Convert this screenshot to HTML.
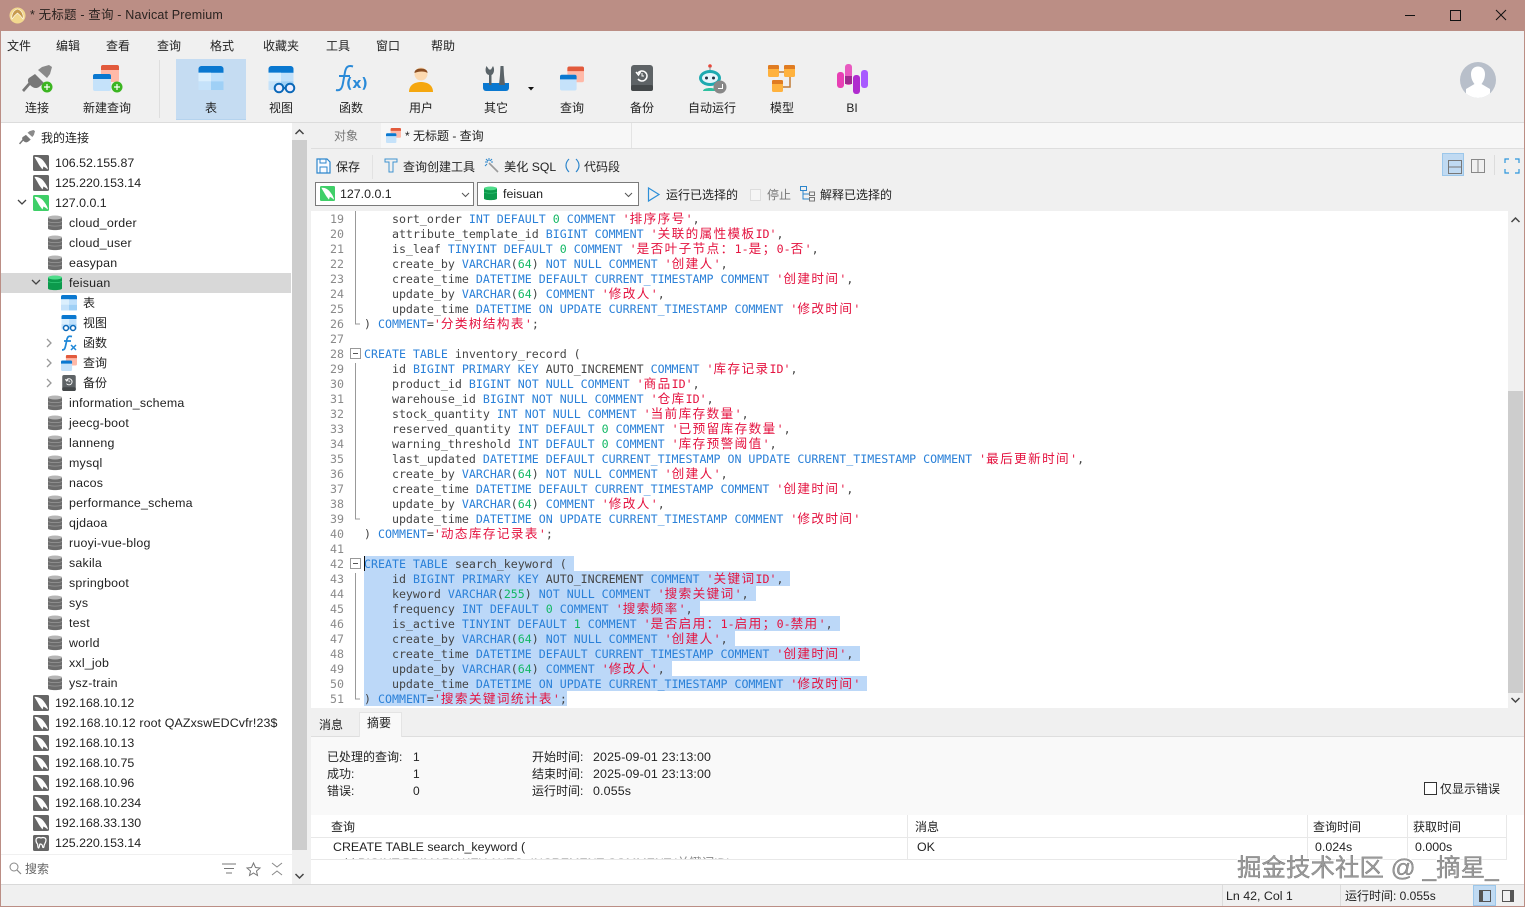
<!DOCTYPE html>
<html><head><meta charset="utf-8"><style>
html,body{margin:0;padding:0;width:1525px;height:907px;overflow:hidden;background:#f0f0f0}
body{position:relative;font-family:"Liberation Sans","Noto Sans CJK SC",sans-serif;font-size:12px;color:#222}
.a{position:absolute}
.t{position:absolute;line-height:20px;height:20px;white-space:pre}
.c{text-align:center;transform:translateX(-50%)}
.t[style*="left:55px"],.t[style*="left:69px"],.t[style*="left:83px"],.t[style*="left:41px"],.t[style*="top:97px"],.t[style*="top:35px"],.t[style*="top:836px"]{margin-top:1px}
.t[style*="left:55px"],.t[style*="left:69px"],.t[style*="top:836px"],.t[style*="left:340px"],.t[style*="left:503px"],.t[style*="left:1226px"]{font-size:12.4px}
.t[style*="left:69px"]{letter-spacing:.22px}
.t.r{letter-spacing:.12px}
.t.dt{font-size:12.4px;letter-spacing:.16px}
svg{position:absolute;overflow:visible}
#code{position:absolute;left:364px;top:211px;font-family:"DejaVu Sans Mono","Liberation Mono",monospace;font-size:11.62px;line-height:15px;color:#444}
#code div{height:15px;padding-top:1px;box-sizing:border-box;white-space:pre;width:fit-content}
#code div.e{color:transparent}
#code .h{background:#bcd8f8;padding-right:7px}
#code b{font-weight:normal;color:#2a80d8}
#code i{font-style:normal;color:#e4123f}
#code u{text-decoration:none;color:#12b864}
#code s{text-decoration:none;font-family:"Noto Sans CJK SC",sans-serif;font-size:12.6px;letter-spacing:1.4px;line-height:0}
#nums{position:absolute;left:311px;width:33px;top:212px;text-align:right;font-family:"DejaVu Sans Mono",monospace;font-size:11.62px;line-height:15px;color:#8a8a8a}
</style></head><body>
<svg width="0" height="0" style="position:absolute"><defs>
<symbol id="my" viewBox="0 0 16 16"><rect width="16" height="16" rx="1.5" fill="#666"/><path d="M1.500 2C5 1.500 8.500 3.500 10.500 6 12.500 8.500 14.500 11.500 15 14.500 13 13 11.500 12 10.500 11.500L9.500 14.500C7.500 12 6 10 5 8 4 6 2.500 4 1.500 2Z" fill="#fff"/></symbol>
<symbol id="myg" viewBox="0 0 16 16"><rect width="16" height="16" rx="1.5" fill="#3fcf68"/><path d="M1.500 2C5 1.500 8.500 3.500 10.500 6 12.500 8.500 14.500 11.500 15 14.500 13 13 11.500 12 10.500 11.500L9.500 14.500C7.500 12 6 10 5 8 4 6 2.500 4 1.500 2Z" fill="#fff"/></symbol>
<symbol id="pg" viewBox="0 0 16 16"><rect width="16" height="16" rx="1.5" fill="#666"/><path d="M3 5C3 2.500 6 2 8 3 10 2 13 2.500 13 5 13 8 11 9 11 11 11 13 9.500 13 9.500 11 9 9 8 9 7 9 6.500 9 6.500 13 5.500 13 4.500 13 5 10 4.500 9 3.500 8 3 7 3 5Z" fill="none" stroke="#fff" stroke-width="1.200"/></symbol>
<symbol id="db" viewBox="0 0 14 16"><path d="M0 2.500C0 .5 14 .5 14 2.500V13.500C14 15.700 0 15.700 0 13.500Z" fill="#6b6b6b"/><ellipse cx="7" cy="2.500" rx="7" ry="2" fill="#b5b5b5"/><path d="M0 6.500C3 8 11 8 14 6.500M0 10C3 11.500 11 11.500 14 10" stroke="#999" stroke-width=".7" fill="none"/></symbol>
<symbol id="dbg" viewBox="0 0 14 16"><path d="M0 2.500C0 .5 14 .5 14 2.500V13.500C14 15.700 0 15.700 0 13.500Z" fill="#0c9a4c"/><ellipse cx="7" cy="2.500" rx="7" ry="2" fill="#4fdc8a"/><path d="M0 6.500C3 8 11 8 14 6.500" stroke="#35c878" stroke-width=".7" fill="none"/></symbol>
<symbol id="tb" viewBox="0 0 26 26"><rect x="0" y="0" width="26" height="25" rx="3" fill="#bfe0fb"/><path d="M0 3A3 3 0 0 1 3 0H23A3 3 0 0 1 26 3V7H0Z" fill="#0a78d0"/><rect x="0" y="7" width="13" height="9" fill="#dbeffd"/><rect x="13" y="16" width="13" height="9" fill="#9fd0f6"/><rect x="0" y="16" width="13" height="9" fill="#c5e2fa"/></symbol>
<symbol id="qr" viewBox="0 0 26 26"><rect x="8" y="0" width="18" height="17" rx="2" fill="#ffb9a8"/><path d="M8 2A2 2 0 0 1 10 0H24A2 2 0 0 1 26 2V5H8Z" fill="#e25a3c"/><rect x="0" y="9" width="18" height="17" rx="2" fill="#c5e2fa"/><path d="M0 11A2 2 0 0 1 2 9H16A2 2 0 0 1 18 11V14H0Z" fill="#0a78d0"/></symbol>
<symbol id="bk" viewBox="0 0 22 26"><rect width="22" height="26" rx="3" fill="#5e6366"/><rect y="20" width="22" height="6" rx="2" fill="#44484a"/><path d="M7 8A5 5 0 1 1 7 14M5 7L7.500 10 9.500 7" fill="none" stroke="#fff" stroke-width="1.500"/><path d="M11 8V11H13" fill="none" stroke="#fff" stroke-width="1"/></symbol>
<symbol id="plug" viewBox="0 0 30 28"><g fill="#777"><path d="M13 9L22 18 17 22C14 24 11 23 8 20 6 18 5 15 7 13Z"/><path d="M9 19L2 27 0 25 7 17Z"/><path d="M16 5L25 13 28 9 30 2 27 0 20 2Z" opacity=".85"/></g></symbol>
</defs></svg>

<!-- title bar -->
<div class="a" style="left:0;top:0;width:1525px;height:31px;background:#bb8e85"></div>
<div class="a" style="left:0;top:0;width:1px;height:907px;background:#bb8e85;z-index:9"></div>
<div class="a" style="right:0;top:0;width:1px;height:907px;background:#bb8e85;z-index:9"></div>
<div class="a" style="left:0;top:906px;width:1525px;height:1px;background:#bb8e85;z-index:9"></div>
<svg style="left:9px;top:7px" width="17" height="17" viewBox="0 0 17 17"><circle cx="8.500" cy="8.500" r="8" fill="#f2d88e"/><path d="M3 12C2 7 5 3 8.500 2 12 3 15 7 14 12 12 9 11 8 8.500 6 6 8 5 9 3 12Z" fill="#c79a4e" stroke="#fff" stroke-width=".6"/></svg>
<div class="t" style="left:30px;top:5px;font-size:12.500px;color:#2a2320;letter-spacing:.17px">* 无标题 - 查询 - Navicat Premium</div>
<div class="a" style="left:1405px;top:15px;width:10px;height:1px;background:#111"></div>
<div class="a" style="left:1450px;top:10px;width:9px;height:9px;border:1px solid #111"></div>
<svg style="left:1496px;top:10px" width="10" height="10"><path d="M0 0L10 10M10 0L0 10" stroke="#111" stroke-width="1"/></svg>

<!-- menu -->
<div class="t" style="left:7px;top:35px">文件</div><div class="t" style="left:56px;top:35px">编辑</div><div class="t" style="left:106px;top:35px">查看</div><div class="t" style="left:157px;top:35px">查询</div><div class="t" style="left:210px;top:35px">格式</div><div class="t" style="left:263px;top:35px">收藏夹</div><div class="t" style="left:326px;top:35px">工具</div><div class="t" style="left:376px;top:35px">窗口</div><div class="t" style="left:431px;top:35px">帮助</div>

<!-- toolbar -->
<div class="a" style="left:159px;top:60px;width:1px;height:58px;background:#dedede"></div>
<div class="a" style="left:176px;top:59px;width:70px;height:60px;background:#c5dcf2;border-bottom:1px solid #b5d3ee"></div>
<svg style="left:22px;top:65px" width="30" height="28"><use href="#plug"/><circle cx="25" cy="22" r="5.500" fill="#3cb521"/><path d="M22 22H28M25 19V25" stroke="#fff" stroke-width="1.200"/></svg>
<svg style="left:93px;top:65px" width="30" height="28"><use href="#qr" width="26" height="26"/><circle cx="24" cy="22" r="5.500" fill="#3cb521"/><path d="M21 22H27M24 19V25" stroke="#fff" stroke-width="1.200"/></svg>
<svg style="left:198px;top:66px" width="26" height="25"><use href="#tb" width="26" height="25"/></svg>
<svg style="left:268px;top:66px" width="28" height="28"><use href="#tb" width="26" height="25"/><circle cx="11" cy="22" r="4.300" fill="#eef" stroke="#0a68b8" stroke-width="2"/><circle cx="22" cy="22" r="4.300" fill="#eef" stroke="#0a68b8" stroke-width="2"/><path d="M15 22H18" stroke="#0a68b8" stroke-width="2"/></svg>
<svg style="left:335px;top:65px" width="34" height="28"><path d="M1 25C5 26 7 24 8 18L10 7C11 2 13 0 18 1.500M4 11H15" fill="none" stroke="#2a8ad8" stroke-width="2"/><text x="11" y="23" font-family="DejaVu Sans,sans-serif" font-size="14" font-weight="bold" fill="#2a8ad8">(x)</text></svg>
<svg style="left:408px;top:65px" width="26" height="28"><circle cx="13" cy="9" r="6.500" fill="#fcd9b0"/><path d="M6.500 8C6 2 20 2 19.500 8 17 6 11 6 6.500 8Z" fill="#8a4d22"/><path d="M1 27C1 19 8 17 13 17 18 17 25 19 25 27Z" fill="#f5a70f"/></svg>
<svg style="left:483px;top:65px" width="26" height="27"><path d="M0 18H26V23A3 3 0 0 1 23 26H3A3 3 0 0 1 0 23Z" fill="#0a78d0"/><path d="M6 20V10C2 9 2 4 3.500 1L6 4.500 8 4.500 10 1C12 4 11 9 8.500 10V20Z" fill="#5a6368"/><path d="M17.500 1H20.500L21 10 22 20H16L17 10Z" fill="#5a6368"/></svg>
<svg style="left:528px;top:87px" width="6" height="4"><path d="M0 0H6L3 3.500Z" fill="#111"/></svg>
<svg style="left:560px;top:65px" width="26" height="27"><use href="#qr" width="24" height="27"/></svg>
<svg style="left:631px;top:65px" width="22" height="26"><use href="#bk" width="22" height="26"/></svg>
<svg style="left:696px;top:63px" width="32" height="32"><circle cx="14" cy="3" r="1.800" fill="#e8473a"/><path d="M14 4V8" stroke="#888"/><ellipse cx="14" cy="15" rx="11" ry="8" fill="#1eaab0"/><ellipse cx="14" cy="15" rx="8" ry="5" fill="#e6f6fb"/><circle cx="10.500" cy="15" r="1.500" fill="#234"/><circle cx="17.500" cy="15" r="1.500" fill="#234"/><path d="M7 28C7 24 21 24 21 28Z" fill="#2ec0a0"/><circle cx="24" cy="24" r="6.500" fill="#888"/><path d="M26.500 21V25.500H22" fill="none" stroke="#fff"/></svg>
<svg style="left:768px;top:65px" width="28" height="28"><path d="M10 7H22V22H10" fill="none" stroke="#c07a36" stroke-width="1.500"/><rect x="0" y="0" width="11" height="12" rx="1.500" fill="#ffb23e"/><path d="M0 4V1.500A1.500 1.500 0 0 1 1.500 0H9.500A1.500 1.500 0 0 1 11 1.500V4Z" fill="#e07c22"/><rect x="16" y="0" width="11" height="12" rx="1.500" fill="#ffb23e"/><path d="M16 4V1.500A1.500 1.500 0 0 1 17.500 0H25.500A1.500 1.500 0 0 1 27 1.500V4Z" fill="#e07c22"/><rect x="4" y="15" width="11" height="12" rx="1.500" fill="#ffb23e"/><path d="M4 19V16.500A1.500 1.500 0 0 1 5.500 15H13.500A1.500 1.500 0 0 1 15 16.500V19Z" fill="#e07c22"/></svg>
<svg style="left:837px;top:64px" width="32" height="31"><rect x="0" y="8" width="7" height="16" rx="3" fill="#e83fb4"/><rect x="8" y="0" width="7" height="21" rx="3" fill="#e85ac0"/><rect x="16" y="11" width="7" height="19" rx="3" fill="#b02ccf"/><rect x="24" y="6" width="7" height="18" rx="3" fill="#a85aff"/><rect x="8" y="12" width="7" height="8" fill="#a02a90"/></svg>
<div class="t c" style="left:37px;top:97px">连接</div><div class="t c" style="left:107px;top:97px">新建查询</div><div class="t c" style="left:211px;top:97px">表</div><div class="t c" style="left:281px;top:97px">视图</div><div class="t c" style="left:351px;top:97px">函数</div><div class="t c" style="left:421px;top:97px">用户</div><div class="t c" style="left:496px;top:97px">其它</div><div class="t c" style="left:572px;top:97px">查询</div><div class="t c" style="left:642px;top:97px">备份</div><div class="t c" style="left:712px;top:97px">自动运行</div><div class="t c" style="left:782px;top:97px">模型</div><div class="t c" style="left:852px;top:97px">BI</div>
<svg style="left:1460px;top:62px" width="36" height="36"><defs><clipPath id="av"><circle cx="18" cy="18" r="18"/></clipPath></defs><circle cx="18" cy="18" r="18" fill="#b8bfca"/><g clip-path="url(#av)" fill="#fff"><path d="M11 12C11 2 25 2 25 12 25 17 23 20 21.500 22L30 27 30 36H6V27L14.500 22C13 20 11 17 11 12Z"/></g></svg>
<div class="a" style="left:1px;top:122px;width:1523px;height:1px;background:#dcdcdc"></div>

<!-- left tree -->
<div class="a" style="left:1px;top:123px;width:291px;height:761px;background:#fff"></div>
<div class="a" style="left:292px;top:123px;width:18px;height:761px;background:#f0f0f0"></div>
<div class="a" style="left:292px;top:140px;width:15px;height:710px;background:#cdcdcd"></div>
<svg style="left:295px;top:129px" width="9" height="6"><path d="M.5 5L4.500 1 8.500 5" fill="none" stroke="#444" stroke-width="1.500"/></svg>
<svg style="left:295px;top:873px" width="9" height="6"><path d="M.5 1L4.500 5 8.500 1" fill="none" stroke="#444" stroke-width="1.500"/></svg>
<div class="a" style="left:1px;top:273px;width:290px;height:20px;background:#d8d8d8"></div>
<svg style="left:19px;top:130px" width="16" height="15" viewBox="0 0 30 28"><use href="#plug" width="30" height="28"/></svg>
<div class="t" style="left:41px;top:127px">我的连接</div>
<svg style="left:33px;top:155px" width="16" height="16"><use href="#my"/></svg><div class="t" style="left:55px;top:152px">106.52.155.87</div>
<svg style="left:33px;top:175px" width="16" height="16"><use href="#my"/></svg><div class="t" style="left:55px;top:172px">125.220.153.14</div>
<svg style="left:17px;top:199px" width="10" height="7"><path d="M1 1L5 5 9 1" fill="none" stroke="#444" stroke-width="1.300"/></svg>
<svg style="left:33px;top:195px" width="16" height="16"><use href="#myg"/></svg><div class="t" style="left:55px;top:192px">127.0.0.1</div>
<svg style="left:48px;top:215px" width="14" height="16"><use href="#db"/></svg><div class="t" style="left:69px;top:212px">cloud_order</div>
<svg style="left:48px;top:235px" width="14" height="16"><use href="#db"/></svg><div class="t" style="left:69px;top:232px">cloud_user</div>
<svg style="left:48px;top:255px" width="14" height="16"><use href="#db"/></svg><div class="t" style="left:69px;top:252px">easypan</div>
<svg style="left:31px;top:279px" width="10" height="7"><path d="M1 1L5 5 9 1" fill="none" stroke="#444" stroke-width="1.300"/></svg>
<svg style="left:48px;top:275px" width="14" height="16"><use href="#dbg"/></svg><div class="t" style="left:69px;top:272px">feisuan</div>
<svg style="left:61px;top:295px" width="16" height="16"><use href="#tb" width="16" height="16"/></svg><div class="t" style="left:83px;top:292px">表</div>
<svg style="left:61px;top:315px" width="16" height="16"><use href="#tb" width="16" height="15"/><circle cx="5" cy="13" r="2.500" fill="#fff" stroke="#0a68b8" stroke-width="1.500"/><circle cx="12" cy="13" r="2.500" fill="#fff" stroke="#0a68b8" stroke-width="1.500"/></svg><div class="t" style="left:83px;top:312px">视图</div>
<svg style="left:46px;top:338px" width="7" height="10"><path d="M1 1L5 5 1 9" fill="none" stroke="#999" stroke-width="1.300"/></svg>
<svg style="left:61px;top:335px" width="16" height="16"><path d="M1 15C4 15 4 13 5 9L6 4C7 1 8 1 11 1.500M3 6H10" fill="none" stroke="#1f88d8" stroke-width="1.700"/><path d="M10 10L15 15M15 10L10 15" stroke="#1f88d8" stroke-width="1.500"/></svg><div class="t" style="left:83px;top:332px">函数</div>
<svg style="left:46px;top:358px" width="7" height="10"><path d="M1 1L5 5 1 9" fill="none" stroke="#999" stroke-width="1.300"/></svg>
<svg style="left:61px;top:355px" width="16" height="16"><use href="#qr" width="16" height="16"/></svg><div class="t" style="left:83px;top:352px">查询</div>
<svg style="left:46px;top:378px" width="7" height="10"><path d="M1 1L5 5 1 9" fill="none" stroke="#999" stroke-width="1.300"/></svg>
<svg style="left:62px;top:375px" width="14" height="16"><use href="#bk" width="14" height="16"/></svg><div class="t" style="left:83px;top:372px">备份</div>
<svg style="left:48px;top:395px" width="14" height="16"><use href="#db"/></svg><div class="t" style="left:69px;top:392px">information_schema</div>
<svg style="left:48px;top:415px" width="14" height="16"><use href="#db"/></svg><div class="t" style="left:69px;top:412px">jeecg-boot</div>
<svg style="left:48px;top:435px" width="14" height="16"><use href="#db"/></svg><div class="t" style="left:69px;top:432px">lanneng</div>
<svg style="left:48px;top:455px" width="14" height="16"><use href="#db"/></svg><div class="t" style="left:69px;top:452px">mysql</div>
<svg style="left:48px;top:475px" width="14" height="16"><use href="#db"/></svg><div class="t" style="left:69px;top:472px">nacos</div>
<svg style="left:48px;top:495px" width="14" height="16"><use href="#db"/></svg><div class="t" style="left:69px;top:492px">performance_schema</div>
<svg style="left:48px;top:515px" width="14" height="16"><use href="#db"/></svg><div class="t" style="left:69px;top:512px">qjdaoa</div>
<svg style="left:48px;top:535px" width="14" height="16"><use href="#db"/></svg><div class="t" style="left:69px;top:532px">ruoyi-vue-blog</div>
<svg style="left:48px;top:555px" width="14" height="16"><use href="#db"/></svg><div class="t" style="left:69px;top:552px">sakila</div>
<svg style="left:48px;top:575px" width="14" height="16"><use href="#db"/></svg><div class="t" style="left:69px;top:572px">springboot</div>
<svg style="left:48px;top:595px" width="14" height="16"><use href="#db"/></svg><div class="t" style="left:69px;top:592px">sys</div>
<svg style="left:48px;top:615px" width="14" height="16"><use href="#db"/></svg><div class="t" style="left:69px;top:612px">test</div>
<svg style="left:48px;top:635px" width="14" height="16"><use href="#db"/></svg><div class="t" style="left:69px;top:632px">world</div>
<svg style="left:48px;top:655px" width="14" height="16"><use href="#db"/></svg><div class="t" style="left:69px;top:652px">xxl_job</div>
<svg style="left:48px;top:675px" width="14" height="16"><use href="#db"/></svg><div class="t" style="left:69px;top:672px">ysz-train</div>
<svg style="left:33px;top:695px" width="16" height="16"><use href="#my"/></svg><div class="t" style="left:55px;top:692px">192.168.10.12</div>
<svg style="left:33px;top:715px" width="16" height="16"><use href="#my"/></svg><div class="t r" style="left:55px;top:712px">192.168.10.12 root QAZxswEDCvfr!23$</div>
<svg style="left:33px;top:735px" width="16" height="16"><use href="#my"/></svg><div class="t" style="left:55px;top:732px">192.168.10.13</div>
<svg style="left:33px;top:755px" width="16" height="16"><use href="#my"/></svg><div class="t" style="left:55px;top:752px">192.168.10.75</div>
<svg style="left:33px;top:775px" width="16" height="16"><use href="#my"/></svg><div class="t" style="left:55px;top:772px">192.168.10.96</div>
<svg style="left:33px;top:795px" width="16" height="16"><use href="#my"/></svg><div class="t" style="left:55px;top:792px">192.168.10.234</div>
<svg style="left:33px;top:815px" width="16" height="16"><use href="#my"/></svg><div class="t" style="left:55px;top:812px">192.168.33.130</div>
<svg style="left:33px;top:835px" width="16" height="16"><use href="#pg"/></svg><div class="t" style="left:55px;top:832px">125.220.153.14</div>
<!-- search -->
<div class="a" style="left:1px;top:854px;width:291px;height:1px;background:#f0f0f0"></div>
<svg style="left:9px;top:862px" width="13" height="13"><circle cx="5" cy="5" r="4" fill="none" stroke="#888"/><path d="M8 8L12 12" stroke="#888" stroke-width="1.200"/></svg>
<div class="t" style="left:25px;top:859px;color:#666">搜索</div>
<svg style="left:222px;top:863px" width="14" height="12"><path d="M0 1H14M2 5.500H12M4 10H10" stroke="#777"/></svg>
<svg style="left:246px;top:862px" width="15" height="14"><path d="M7.500 1L9.500 5.500 14 6 10.500 9 11.500 13.500 7.500 11 3.500 13.500 4.500 9 1 6 5.500 5.500Z" fill="none" stroke="#777"/></svg>
<svg style="left:270px;top:862px" width="14" height="14"><path d="M2 1L7 5 12 1M2 13L7 9 12 13" fill="none" stroke="#888"/></svg>
<div class="a" style="left:1px;top:884px;width:1523px;height:1px;background:#d9d9d9"></div>

<!-- tabs -->
<div class="a" style="left:632px;top:123px;width:892px;height:25px;background:#f7f7f7"></div>
<div class="a" style="left:381px;top:123px;width:251px;height:25px;background:#f7f7f7;border-right:1px solid #e4e4e4;box-sizing:border-box"></div>
<div class="t" style="left:334px;top:126px;color:#777">对象</div>
<svg style="left:386px;top:128px" width="15" height="15"><use href="#qr" width="15" height="15"/></svg>
<div class="t" style="left:405px;top:126px">* 无标题 - 查询</div>
<div class="a" style="left:311px;top:148px;width:1213px;height:1px;background:#dedede"></div>

<!-- query toolbar -->
<svg style="left:316px;top:158px" width="15" height="16"><path d="M1 1H11L14 4V15H1Z" fill="#f8fbff" stroke="#2d86cc" stroke-width="1.200"/><rect x="4" y="1" width="6" height="4" fill="none" stroke="#2d86cc"/><rect x="4" y="9" width="7" height="6" fill="none" stroke="#2d86cc"/></svg>
<div class="t" style="left:336px;top:157px">保存</div>
<div class="a" style="left:372px;top:155px;width:1px;height:24px;background:#e2e2e2"></div>
<svg style="left:384px;top:158px" width="14" height="15"><path d="M1 1H13V4H9V14H5V4H1Z" fill="none" stroke="#3f93d0"/></svg>
<div class="t" style="left:403px;top:157px">查询创建工具</div>
<svg style="left:484px;top:157px" width="15" height="16"><path d="M5 6L14 15" stroke="#9a9a9a" stroke-width="1.600"/><path d="M5 1V4M1 5H4M2 2L4 4M8 2L6 4M1 9L3 7M9 5H7" stroke="#2d86cc"/></svg>
<div class="t" style="left:504px;top:157px;font-size:12.200px">美化 SQL</div>
<svg style="left:565px;top:158px" width="15" height="15"><path d="M4 1C0 5 0 10 4 14M11 1C15 5 15 10 11 14" fill="none" stroke="#2d86cc" stroke-width="1.200"/></svg>
<div class="t" style="left:584px;top:157px">代码段</div>
<div class="a" style="left:1442px;top:153px;width:22px;height:23px;background:#c0daf2;border:1px solid #9cc7ea;box-sizing:border-box"></div>
<svg style="left:1448px;top:160px" width="14" height="14"><rect x=".5" y=".5" width="13" height="13" fill="none" stroke="#777"/><path d="M0 7H14" stroke="#777"/></svg>
<svg style="left:1471px;top:159px" width="14" height="14"><rect x=".5" y=".5" width="13" height="13" fill="none" stroke="#888"/><path d="M7 0V14" stroke="#888"/></svg>
<div class="a" style="left:1494px;top:155px;width:1px;height:20px;background:#dcdcdc"></div>
<svg style="left:1505px;top:159px" width="14" height="14"><path d="M0 4V0H4M10 0H14V4M14 10V14H10M4 14H0V10" fill="none" stroke="#2d96dc" stroke-width="1.200"/></svg>

<!-- selectors -->
<div class="a" style="left:315px;top:182px;width:159px;height:24px;background:#fff;border:1px solid #7a7a7a;box-sizing:border-box"></div>
<svg style="left:320px;top:186px" width="15" height="15" viewBox="0 0 16 16"><use href="#myg" width="16" height="16"/></svg>
<div class="t" style="left:340px;top:184px">127.0.0.1</div>
<svg style="left:461px;top:192px" width="9" height="6"><path d="M1 1L4.500 4.500 8 1" fill="none" stroke="#555"/></svg>
<div class="a" style="left:477px;top:182px;width:162px;height:24px;background:#fff;border:1px solid #7a7a7a;box-sizing:border-box"></div>
<svg style="left:484px;top:186px" width="13" height="15" viewBox="0 0 14 16"><use href="#dbg" width="14" height="16"/></svg>
<div class="t" style="left:503px;top:184px">feisuan</div>
<svg style="left:624px;top:192px" width="9" height="6"><path d="M1 1L4.500 4.500 8 1" fill="none" stroke="#555"/></svg>
<svg style="left:647px;top:187px" width="13" height="15"><path d="M1.500 1L12 7.500 1.500 14Z" fill="none" stroke="#2d8fd8" stroke-width="1.200"/></svg>
<div class="t" style="left:666px;top:185px">运行已选择的</div>
<div class="a" style="left:750px;top:189px;width:9px;height:10px;background:#f6f6f6;border:1px solid #ddd"></div>
<div class="t" style="left:767px;top:185px;color:#777">停止</div>
<svg style="left:800px;top:186px" width="16" height="16"><rect x=".5" y=".5" width="6" height="4" fill="none" stroke="#2d86cc"/><rect x="9.500" y="6" width="5" height="3.500" fill="none" stroke="#777"/><rect x="9.500" y="11.500" width="5" height="3.500" fill="none" stroke="#777"/><path d="M3 5V13H9M3 8H9" fill="none" stroke="#2d86cc"/></svg>
<div class="t" style="left:820px;top:185px">解释已选择的</div>

<!-- editor -->
<div class="a" style="left:311px;top:211px;width:1197px;height:497px;background:#fff;overflow:hidden">
</div>
<div class="a" style="left:1508px;top:211px;width:16px;height:497px;background:#f0f0f0"></div>
<div class="a" style="left:1508px;top:391px;width:15px;height:302px;background:#cdcdcd"></div>
<svg style="left:1511px;top:217px" width="9" height="6"><path d="M.5 5L4.500 1 8.500 5" fill="none" stroke="#444" stroke-width="1.500"/></svg>
<svg style="left:1511px;top:697px" width="9" height="6"><path d="M.5 1L4.500 5 8.500 1" fill="none" stroke="#444" stroke-width="1.500"/></svg>
<div id="nums" style="height:496px;overflow:hidden">19<br>20<br>21<br>22<br>23<br>24<br>25<br>26<br>27<br>28<br>29<br>30<br>31<br>32<br>33<br>34<br>35<br>36<br>37<br>38<br>39<br>40<br>41<br>42<br>43<br>44<br>45<br>46<br>47<br>48<br>49<br>50<br>51</div>
<svg style="left:349px;top:211px" width="14" height="497">
<path d="M6.500 0V113H11M6.500 152V308H11M6.500 362V488H11" fill="none" stroke="#999"/>
<rect x="1.500" y="137.500" width="10" height="10" fill="#fff" stroke="#999"/><path d="M4 142.500H9" stroke="#555"/>
<rect x="1.500" y="347.500" width="10" height="10" fill="#fff" stroke="#999"/><path d="M4 352.500H9" stroke="#555"/>
</svg>
<div id="code">
<div>    sort_order <b>INT DEFAULT</b> <u>0</u> <b>COMMENT</b> <i>'<s>排序序号</s>'</i>,</div>
<div>    attribute_template_id <b>BIGINT COMMENT</b> <i>'<s>关联的属性模板</s>ID'</i>,</div>
<div>    is_leaf <b>TINYINT DEFAULT</b> <u>0</u> <b>COMMENT</b> <i>'<s>是否叶子节点：</s>1-<s>是；</s>0-<s>否</s>'</i>,</div>
<div>    create_by <b>VARCHAR</b>(<u>64</u>) <b>NOT NULL COMMENT</b> <i>'<s>创建人</s>'</i>,</div>
<div>    create_time <b>DATETIME DEFAULT CURRENT_TIMESTAMP COMMENT</b> <i>'<s>创建时间</s>'</i>,</div>
<div>    update_by <b>VARCHAR</b>(<u>64</u>) <b>COMMENT</b> <i>'<s>修改人</s>'</i>,</div>
<div>    update_time <b>DATETIME ON UPDATE CURRENT_TIMESTAMP COMMENT</b> <i>'<s>修改时间</s>'</i></div>
<div>) <b>COMMENT</b>=<i>'<s>分类树结构表</s>'</i>;</div>
<div class="e"> </div>
<div><b>CREATE TABLE</b> inventory_record (</div>
<div>    id <b>BIGINT PRIMARY KEY</b> AUTO_INCREMENT <b>COMMENT</b> <i>'<s>库存记录</s>ID'</i>,</div>
<div>    product_id <b>BIGINT NOT NULL COMMENT</b> <i>'<s>商品</s>ID'</i>,</div>
<div>    warehouse_id <b>BIGINT NOT NULL COMMENT</b> <i>'<s>仓库</s>ID'</i>,</div>
<div>    stock_quantity <b>INT NOT NULL COMMENT</b> <i>'<s>当前库存数量</s>'</i>,</div>
<div>    reserved_quantity <b>INT DEFAULT</b> <u>0</u> <b>COMMENT</b> <i>'<s>已预留库存数量</s>'</i>,</div>
<div>    warning_threshold <b>INT DEFAULT</b> <u>0</u> <b>COMMENT</b> <i>'<s>库存预警阈值</s>'</i>,</div>
<div>    last_updated <b>DATETIME DEFAULT CURRENT_TIMESTAMP ON UPDATE CURRENT_TIMESTAMP COMMENT</b> <i>'<s>最后更新时间</s>'</i>,</div>
<div>    create_by <b>VARCHAR</b>(<u>64</u>) <b>NOT NULL COMMENT</b> <i>'<s>创建人</s>'</i>,</div>
<div>    create_time <b>DATETIME DEFAULT CURRENT_TIMESTAMP COMMENT</b> <i>'<s>创建时间</s>'</i>,</div>
<div>    update_by <b>VARCHAR</b>(<u>64</u>) <b>COMMENT</b> <i>'<s>修改人</s>'</i>,</div>
<div>    update_time <b>DATETIME ON UPDATE CURRENT_TIMESTAMP COMMENT</b> <i>'<s>修改时间</s>'</i></div>
<div>) <b>COMMENT</b>=<i>'<s>动态库存记录表</s>'</i>;</div>
<div class="e"> </div>
<div class="h"><b>CREATE TABLE</b> search_keyword (</div>
<div class="h">    id <b>BIGINT PRIMARY KEY</b> AUTO_INCREMENT <b>COMMENT</b> <i>'<s>关键词</s>ID'</i>,</div>
<div class="h">    keyword <b>VARCHAR</b>(<u>255</u>) <b>NOT NULL COMMENT</b> <i>'<s>搜索关键词</s>'</i>,</div>
<div class="h">    frequency <b>INT DEFAULT</b> <u>0</u> <b>COMMENT</b> <i>'<s>搜索频率</s>'</i>,</div>
<div class="h">    is_active <b>TINYINT DEFAULT</b> <u>1</u> <b>COMMENT</b> <i>'<s>是否启用：</s>1-<s>启用；</s>0-<s>禁用</s>'</i>,</div>
<div class="h">    create_by <b>VARCHAR</b>(<u>64</u>) <b>NOT NULL COMMENT</b> <i>'<s>创建人</s>'</i>,</div>
<div class="h">    create_time <b>DATETIME DEFAULT CURRENT_TIMESTAMP COMMENT</b> <i>'<s>创建时间</s>'</i>,</div>
<div class="h">    update_by <b>VARCHAR</b>(<u>64</u>) <b>COMMENT</b> <i>'<s>修改人</s>'</i>,</div>
<div class="h">    update_time <b>DATETIME ON UPDATE CURRENT_TIMESTAMP COMMENT</b> <i>'<s>修改时间</s>'</i></div>
<div class="h" style="padding-right:0">) <b>COMMENT</b>=<i>'<s>搜索关键词统计表</s>'</i>;</div>
</div>
<div class="a" style="left:364px;top:556px;width:1px;height:15px;background:#111"></div>

<!-- result tabs -->
<div class="a" style="left:311px;top:708px;width:1213px;height:29px;background:#f0f0f0;border-bottom:1px solid #dedede;box-sizing:border-box"></div>
<div class="a" style="left:359px;top:712px;width:43px;height:25px;background:#f9f9f9;border:1px solid #e4e4e4;border-bottom:0;box-sizing:border-box"></div>
<div class="t" style="left:319px;top:715px">消息</div>
<div class="t" style="left:367px;top:713px">摘要</div>

<!-- summary -->
<div class="a" style="left:311px;top:737px;width:1213px;height:78px;background:#f9f9f9"></div>
<div class="t" style="left:327px;top:747px">已处理的查询:</div><div class="t" style="left:413px;top:747px">1</div>
<div class="t" style="left:327px;top:764px">成功:</div><div class="t" style="left:413px;top:764px">1</div>
<div class="t" style="left:327px;top:781px">错误:</div><div class="t" style="left:413px;top:781px">0</div>
<div class="t" style="left:532px;top:747px">开始时间:</div><div class="t dt" style="left:593px;top:747px">2025-09-01 23:13:00</div>
<div class="t" style="left:532px;top:764px">结束时间:</div><div class="t dt" style="left:593px;top:764px">2025-09-01 23:13:00</div>
<div class="t" style="left:532px;top:781px">运行时间:</div><div class="t dt" style="left:593px;top:781px">0.055s</div>
<div class="a" style="left:1424px;top:782px;width:13px;height:13px;background:#fff;border:1px solid #333;box-sizing:border-box"></div>
<div class="t" style="left:1440px;top:779px">仅显示错误</div>

<!-- grid -->
<div class="a" style="left:311px;top:815px;width:1213px;height:69px;background:#fff"></div>
<div class="a" style="left:311px;top:837px;width:1196px;height:1px;background:#e8e8e8"></div>
<div class="a" style="left:311px;top:859px;width:1196px;height:1px;background:#e8e8e8"></div>
<div class="a" style="left:907px;top:815px;width:1px;height:45px;background:#e8e8e8"></div>
<div class="a" style="left:1307px;top:815px;width:1px;height:45px;background:#e8e8e8"></div>
<div class="a" style="left:1407px;top:815px;width:1px;height:45px;background:#e8e8e8"></div>
<div class="a" style="left:1506px;top:815px;width:1px;height:45px;background:#e8e8e8"></div>
<div class="t" style="left:331px;top:817px">查询</div><div class="t" style="left:915px;top:817px">消息</div><div class="t" style="left:1313px;top:817px">查询时间</div><div class="t" style="left:1413px;top:817px">获取时间</div>
<div class="t" style="left:333px;top:836px">CREATE TABLE search_keyword (</div><div class="t" style="left:917px;top:836px">OK</div><div class="t" style="left:1315px;top:836px">0.024s</div><div class="t" style="left:1415px;top:836px">0.000s</div>
<div class="a" style="left:345px;top:856px;width:560px;height:3px;overflow:hidden;line-height:14px;font-size:12.400px;white-space:pre;color:#888"><span style="position:absolute;top:0;left:0">id BIGINT PRIMARY KEY AUTO_INCREMENT COMMENT '关键词ID',</span></div>

<!-- status -->
<div class="a" style="left:1222px;top:885px;width:1px;height:21px;background:#dcdcdc"></div>
<div class="a" style="left:1340px;top:885px;width:1px;height:21px;background:#dcdcdc"></div>
<div class="t" style="left:1226px;top:886px">Ln 42, Col 1</div>
<div class="t" style="left:1345px;top:886px">运行时间: 0.055s</div>
<div class="a" style="left:1473px;top:885px;width:23px;height:21px;background:#c0daf2;border:1px solid #9cc7ea;box-sizing:border-box"></div>
<svg style="left:1479px;top:890px" width="12" height="12"><rect x=".5" y=".5" width="11" height="11" fill="none" stroke="#555"/><rect x="0" y="0" width="4" height="12" fill="#555"/></svg>
<svg style="left:1502px;top:890px" width="12" height="12"><rect x=".5" y=".5" width="11" height="11" fill="none" stroke="#555"/><rect x="8" y="0" width="4" height="12" fill="#555"/></svg>

<!-- watermark -->
<div class="a" style="left:1237px;top:853px;font-size:24.500px;line-height:32px;white-space:pre;color:#9a9a9a;-webkit-text-stroke:.3px #666;text-shadow:1px 1px 0 #fff,-1px -1px 0 #fff,1px -1px 0 #fff,-1px 1px 0 #fff;z-index:5">掘金技术社区 @ _摘星_</div>
</body></html>
